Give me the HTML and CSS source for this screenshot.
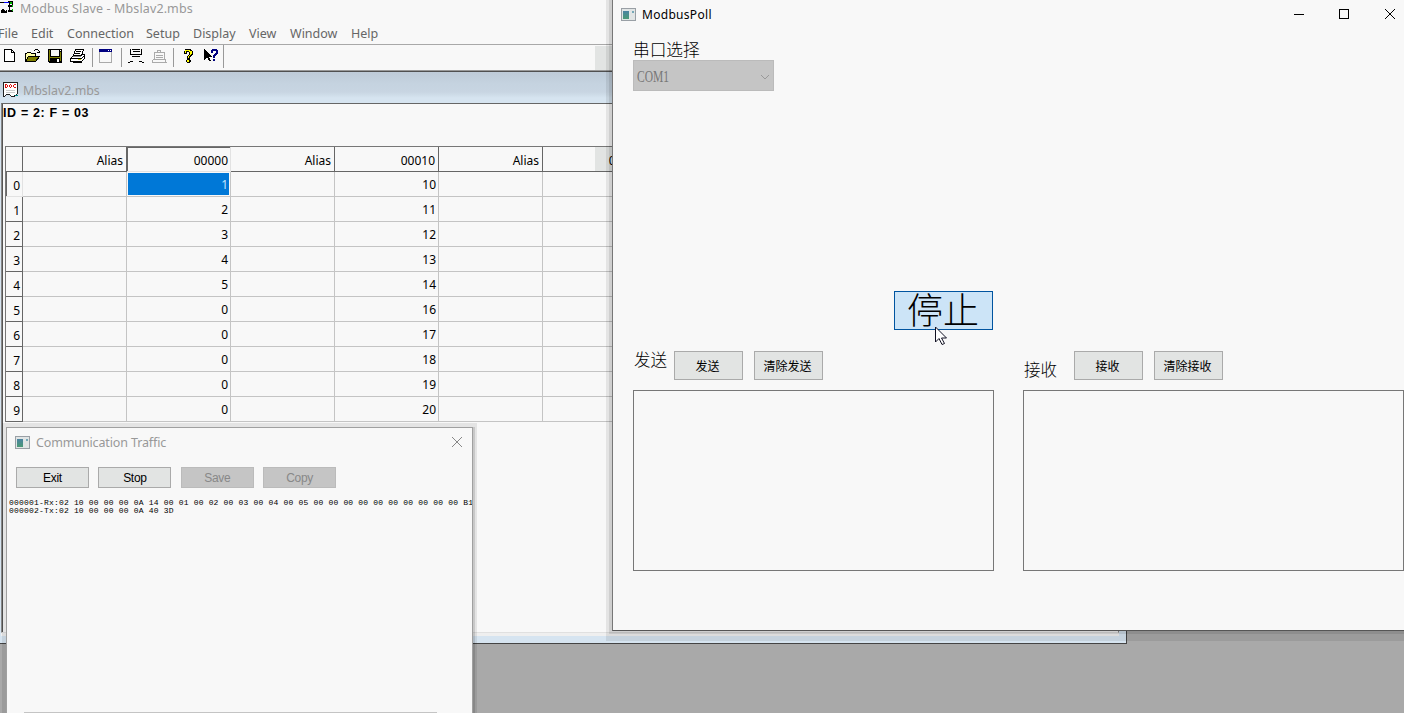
FILE: index.html
```html
<!DOCTYPE html>
<html lang="zh-CN">
<head>
  <meta charset="UTF-8" />
  <meta name="viewport" content="width=device-width, initial-scale=1.0">
  <title>Modbus Slave - Mbslav2.mbs</title>
  <link rel="stylesheet" href="styles.css">
</head>
<body>
  <div class="slave">
    <div class="slave-title">
      <svg class="app-icon" width="16" height="16" viewBox="0 0 16 16" shape-rendering="crispEdges">
        <path d="M0 2h4v1h-4zM8 1h5v2h-5zM9 1h1v4h-1zM12 2h1v3h-1zM8 5h5v2h-5zM9 6h1v5h-1zM8 10h5v2h-5zM0 13h1v-3h1v-1h2v1h1v1h1v-1h1v3z" fill="#000"/>
        <path d="M4 2h5v1h-5z" fill="#00f"/>
        <path d="M10 2h2v2h-2zM12 5h1v2h-1zM12 9h1v2h-1z" fill="#0b0"/>
      </svg>
      <span>Modbus Slave - Mbslav2.mbs</span>
    </div>
    <div class="menu">
      <span class="m-file">File</span>
      <span class="m-edit">Edit</span>
      <span class="m-connection">Connection</span>
      <span class="m-setup">Setup</span>
      <span class="m-display">Display</span>
      <span class="m-view">View</span>
      <span class="m-window">Window</span>
      <span class="m-help">Help</span>
    </div>
    <div class="toolbar">
      <svg width="16" height="16" viewBox="0 0 16 16" shape-rendering="crispEdges">
        <path d="M2.5 1.5h7l3 3v9h-10zM9.5 1.5v3h3" fill="#fff" stroke="#000"/>
      </svg>
      <svg width="16" height="16" viewBox="0 0 16 16" shape-rendering="crispEdges">
        <path d="M.500 13v-7.500h1l1-1h3l1 1h4v3" fill="#ffffa8" stroke="#000"/>
        <path d="M.500 13.500l3-5h11l-4 5z" fill="#808000" stroke="#000"/>
        <path d="M9 2h1v1h-1zM10 1h3v1h-3zM13 2h1v1h-1zM14 3h1v2h-1zM12 4h3v1h-3z"/>
      </svg>
      <svg class="save" width="16" height="16" viewBox="0 0 16 16" shape-rendering="crispEdges">
        <path d="M1 1h14v14h-13l-1-1z"/>
        <path d="M2 2h1v11h-1zM13 4h1v9h-1zM3 9h10v1h-10z" fill="#808000"/>
        <path d="M4 2h8v6h-8z" fill="#f8f8f8"/>
        <path d="M13 2h1v1h-1zM10 11h2v3h-2z" fill="#fff"/>
      </svg>
      <svg width="16" height="16" viewBox="0 0 16 16" shape-rendering="crispEdges">
        <path d="M5.500 1.500h8l-2 6h-8zM3.500 7.500l-3 3v3h11l3-3v-4h-3" fill="#fff" stroke="#000"/>
        <path d="M6 3h5v1h-5zM5 5h5v1h-5zM1 10h11v1h-11zM3 14h9v1h-9zM12 9h1v1h-1zM13 8h1v1h-1z"/>
        <path d="M8 11h3v1h-3z" fill="#cc0"/>
        <path d="M3 8h8v1h-8z" fill="#888"/>
      </svg>
      <i class="sep"></i>
      <svg class="win" width="16" height="16" viewBox="0 0 16 16" shape-rendering="crispEdges">
        <path d="M1.500 1.500h12v13h-12z" fill="#f8f8f8" stroke="#aaa"/>
        <path d="M1 1h13v3h-13z" fill="#000080"/>
        <path d="M10 2h1v1h-1zM12 2h1v1h-1z" fill="#fff"/>
      </svg>
      <i class="sep"></i>
      <svg class="connect" width="16" height="16" viewBox="0 0 16 16" shape-rendering="crispEdges">
        <path d="M2.500 1v6M13.500 1v6M2 6.500h12M4 1.500h8M5 3.500h7M4 8.500h8M0 14.500h2M2 13.500h3M11 13.500h3M14 14.500h2" fill="none" stroke="#000"/>
      </svg>
      <svg width="16" height="16" viewBox="0 0 16 16" shape-rendering="crispEdges">
        <path d="M6.500 4v-2h3v2M3.500 11v-6.500h10v6.500M5 7.500h7M5 9.500h7M2 11.500h13M1 14.500h15M1.500 12v2M14.500 12v2" fill="none" stroke="#aaa"/>
      </svg>
      <i class="sep"></i>
      <svg class="help" width="16" height="16" viewBox="0 0 16 16" shape-rendering="crispEdges">
        <path d="M5 1h6v1h1v1h1v4h-1v1h-1v1h-1v2h-3v-3h1v-1h1v-3h-2v2h-3v-3h1zM7 11h3v1h1v2h-1v1h-3v-1h-1v-2h1z"/>
        <path d="M5 2h5v1h2v3h-1v1h-1v1h-1v2h-1v-2h1v-1h1v-3h-1v-1h-3v2h-1zM7 12h2v2h-2z" fill="#ff0"/>
      </svg>
      <svg width="16" height="16" viewBox="0 0 16 16" shape-rendering="crispEdges">
        <path d="M1 1l8 8h-3l2 4h-2l-2-4-3 3z"/>
        <path d="M8 1h6v1h1v4h-1v1h-1v1h-1v2h-2v-3h1v-1h1v-1h1v-2h-3v2h-2v-3h1zM10 11h2v2h-2z" fill="#000080"/>
      </svg>
      <i class="sep sep-last"></i>
    </div>

    <div class="child">
      <div class="child-title">
        <svg width="17" height="17" viewBox="0 0 17 17" shape-rendering="crispEdges">
          <path d="M.5.5h14v11l-2 2-2 1h-2l-2-2h-3l-2 2h-1z" fill="#fff" stroke="#222"/>
          <path d="M2 2h2v1h1v2h-1v1h-2zM3 3v2h1v-2zM7 2h1v1h1v2h-1v1h-1v-1h-1v-2h1zM7 3v2h1v-2zM11 2h2v1h-2v2h2v1h-2v-1h-1v-2h1z" fill="#d11" fill-rule="evenodd"/>
          <path d="M3 8.500h9M3 10.500h9" stroke="#ccc"/>
          <path d="M12 13h3v1h-3z" fill="#088"/>
        </svg>
        <span>Mbslav2.mbs</span>
      </div>
      <div class="doc">
        <div class="doc-head">ID = 2: F = 03</div>
        <div class="grid">
          <div class="row head"><b></b><span>Alias</span><span class="cur">00000</span><span>Alias</span><span>00010</span><span>Alias</span><span class="shade">00020</span></div>
          <div class="row"><b class="cur">0</b><span></span><span class="sel">1</span><span></span><span>10</span><span></span><span></span></div>
          <div class="row"><b>1</b><span></span><span>2</span><span></span><span>11</span><span></span><span></span></div>
          <div class="row"><b>2</b><span></span><span>3</span><span></span><span>12</span><span></span><span></span></div>
          <div class="row"><b>3</b><span></span><span>4</span><span></span><span>13</span><span></span><span></span></div>
          <div class="row"><b>4</b><span></span><span>5</span><span></span><span>14</span><span></span><span></span></div>
          <div class="row"><b>5</b><span></span><span>0</span><span></span><span>16</span><span></span><span></span></div>
          <div class="row"><b>6</b><span></span><span>0</span><span></span><span>17</span><span></span><span></span></div>
          <div class="row"><b>7</b><span></span><span>0</span><span></span><span>18</span><span></span><span></span></div>
          <div class="row"><b>8</b><span></span><span>0</span><span></span><span>19</span><span></span><span></span></div>
          <div class="row"><b>9</b><span></span><span>0</span><span></span><span>20</span><span></span><span></span></div>
        </div>
      </div>
    </div>
  </div>

  <div class="traffic">
    <div class="traffic-title">
      <i class="win-icon"></i>
      <span>Communication Traffic</span>
      <svg width="12" height="12" viewBox="0 0 12 12"><path d="M1 1l10 10M11 1l-10 10" stroke="#888"/></svg>
    </div>
    <div class="traffic-buttons">
      <button>Exit</button>
      <button>Stop</button>
      <button disabled>Save</button>
      <button disabled>Copy</button>
    </div>
    <pre class="log">000001-Rx:02 10 00 00 00 0A 14 00 01 00 02 00 03 00 04 00 05 00 00 00 00 00 00 00 00 00 00 B1
000002-Tx:02 10 00 00 00 0A 40 3D</pre>
    <div class="traffic-line"></div>
  </div>

  <div class="poll">
    <div class="poll-title">
      <i class="win-icon"></i>
      <span>ModbusPoll</span>
      <svg width="102" height="12" viewBox="0 0 102 12">
        <path d="M0 6.500h10M45.500 1.500h9v9h-9z" fill="none" stroke="#000" shape-rendering="crispEdges"/>
        <path d="M91 1l10 10M101 1l-10 10" stroke="#000"/>
      </svg>
    </div>
    <div class="port">
      <label>串口选择</label>
      <div class="select">
        <span>COM1</span>
        <svg width="10" height="6" viewBox="0 0 10 6"><path d="M1 1l4 4 4-4" fill="none" stroke="#999"/></svg>
      </div>
    </div>
    <div class="stop-row">
      <button class="stop">停止</button>
      <svg class="cursor" width="13" height="21" viewBox="0 0 13 21"><path d="M.5 1v15l3.500-3.500 3 6 2.500-1-3-5.500h5z" fill="#fff" stroke="#112"/></svg>
    </div>
    <div class="panels">
      <div class="panel send">
        <div class="panel-bar"><label>发送</label><button>发送</button><button>清除发送</button></div>
        <div class="box"></div>
      </div>
      <div class="panel receive">
        <div class="panel-bar"><label>接收</label><button>接收</button><button>清除接收</button></div>
        <div class="box"></div>
      </div>
    </div>
  </div>
</body>
</html>
```
FILE: styles.css
```css
* {
  box-sizing: border-box;
}
html, body {
  height: 100%;
  margin: 0;
  overflow: hidden;
}
body {
  position: relative;
  background-color: #a9a9a9;
  font-family: "Noto Sans", "Noto Sans CJK SC", sans-serif;
  font-size: 12px;
  color: #000;
}
svg {
  display: block;
  flex: none;
}
button {
  padding: 0;
  font-family: inherit;
  color: #000;
  background-color: #e2e4e3;
  border: 1px solid #aaa;
}

/* Modbus Slave main window */
.slave-title, .menu, .toolbar {
  background-color: #f8f8f8;
}
.slave-title {
  display: flex;
  height: 20px;
  color: #999;
  font-size: 12.5px;
  line-height: 17px;
}
.slave-title span {
  margin-left: 4px;
  letter-spacing: 0.12px;
}
.menu {
  display: flex;
  height: 24px;
  color: #666;
  font-size: 12.5px;
  line-height: 28px;
  white-space: nowrap;
}
.menu span {
  flex: none;
}
.m-file {
  width: 33px;
  margin-left: -2px;
}
.m-edit { width: 36px; }
.m-connection { width: 79px; }
.m-setup { width: 47px; }
.m-display { width: 56px; }
.m-view { width: 41px; }
.m-window { width: 61px; }
.toolbar {
  display: flex;
  height: 27px;
  padding: 3px 0 0 2px;
  gap: 7px;
  background: linear-gradient(#e2e4e3, #e2e4e3) 595px 1px / 20px 24px no-repeat #f8f8f8;
  border-top: 1px solid #a8a8a8;
  border-bottom: 1px solid #999;
}
.toolbar .save {
  margin-left: -1px;
}
.toolbar .win {
  margin-right: 1px;
}
.toolbar .connect, .toolbar .help {
  margin-left: 1px;
}
.toolbar .sep {
  width: 1px;
  height: 19px;
  margin: 0 -2px 0 -1px;
  background-color: #999;
}
.toolbar .sep-last {
  height: 23px;
  margin: -3px 0 0 -3px;
}

/* document window inside the main window */
.child {
  width: 1127px;
  height: 573px;
  padding: 0 7px 0 1px;
  background: linear-gradient(#becbd8 0, #c5d3e0 12px, #c8d5e2 20px, #d6e4f0 26px, #d6e4f0);
  border-top: 1px solid #505050;
  border-right: 1px solid #444;
  border-bottom: 1px solid #444;
}
.child-title {
  display: flex;
  height: 31px;
  padding: 10px 0 0 2px;
  color: #999;
  font-size: 12.4px;
  line-height: 18px;
}
.child-title span {
  margin-left: 3px;
}
.doc {
  height: 530px;
  padding-left: 3px;
  background-color: #f8f8f8;
  border: 1px solid #888;
  border-top-color: #666;
  border-bottom-color: #e0e0e0;
  box-shadow: inset 1px 0 #555, 0 3px #efefef;
  overflow: hidden;
}
.doc-head {
  height: 42px;
  margin-left: -2px;
  font-family: "Liberation Sans", Arial, sans-serif;
  font-size: 12.5px;
  font-weight: bold;
  letter-spacing: 0.65px;
  line-height: 18px;
}
.grid {
  width: 700px;
  border-left: 1px solid #777;
  border-top: 1px solid #777;
}
.row {
  display: flex;
  height: 25px;
}
.row span, .row b {
  flex: none;
  height: 25px;
  text-align: right;
  border-bottom: 1px solid #c4c4c4;
}
.row span {
  width: 104px;
  padding-right: 2px;
  line-height: 26px;
  border-right: 1px solid #c4c4c4;
}
.row b {
  width: 17px;
  padding-right: 2px;
  font-weight: normal;
  line-height: 28px;
  border-right: 1px solid #666;
  border-bottom-color: #666;
}
.row.head span {
  padding-right: 3px;
  line-height: 28px;
  border-right-color: #666;
  border-bottom-color: #666;
}
.row.head .cur {
  padding-right: 2px;
  border-right-color: #e2e2e2;
  border-bottom-color: #e2e2e2;
  box-shadow: inset 1px 1px #666;
}
.row.head .shade {
  background: linear-gradient(#e2e4e3, #e2e4e3) 52px 0 / 52px 24px no-repeat;
}
.row b.cur {
  border-right-color: #e2e2e2;
  border-bottom-color: #e2e2e2;
  box-shadow: inset 1px 0 #666;
}
.row .sel {
  color: #c0e4ff;
  background: #0078d7;
  background-clip: padding-box;
  box-shadow: inset 0 0 0 1px #f8f8f8;
}

/* Communication Traffic window */
.traffic {
  position: absolute;
  left: 6px;
  top: 427px;
  width: 467px;
  height: 300px;
  background-color: #f8f8f8;
  border: 1px solid #a0a0a0;
  box-shadow: 2px 0 0 rgba(0,0,0,0.12), 0 0 0 4px rgba(0,0,0,0.08);
  overflow: hidden;
}
.traffic-title {
  display: flex;
  align-items: center;
  height: 28px;
  padding: 0 9px 0 8px;
  color: #999;
  font-size: 12.5px;
  letter-spacing: -0.13px;
}
.traffic-title span {
  flex: 1;
  margin-left: 6px;
}
.win-icon {
  flex: none;
  width: 15px;
  height: 13px;
  border: 1px solid #999fa5;
  background: linear-gradient(#4b83a2, #4b9a76) 1px 2px / 6px 8px no-repeat, linear-gradient(#77a9b8, #77a9b8) 10px 2px / 2px 2px no-repeat, #e1e5e5;
}
.traffic-buttons {
  display: flex;
  gap: 9px;
  height: 29px;
  padding: 11px 0 0 9px;
}
.traffic-buttons button {
  width: 73px;
  height: 21px;
  margin-right: 0.4px;
  font-family: "Liberation Sans", Arial, sans-serif;
  font-size: 12px;
  letter-spacing: -0.3px;
}
.traffic-buttons button:disabled {
  color: #888;
  background-color: #c5c5c5;
  border-color: #bbb;
}
.log {
  margin: 14px 0 0 2px;
  font-family: "Liberation Mono", "Courier New", monospace;
  font-size: 8px;
  letter-spacing: 0.19px;
  line-height: 8px;
}
.traffic-line {
  width: 413px;
  height: 1px;
  margin: 197px 0 0 17px;
  background-color: #c4c4c4;
}

/* ModbusPoll window */
.poll {
  position: absolute;
  left: 612px;
  top: 0;
  width: 792px;
  height: 631px;
  background-color: #f8f8f8;
  border-left: 1px solid #777;
  border-bottom: 1px solid #555;
  box-shadow: 0 0 0 3px rgba(0,0,0,0.09), 0 4px 0 6px rgba(0,0,0,0.08);
}
.poll-title {
  display: flex;
  align-items: center;
  height: 28px;
  padding: 0 8px;
}
.poll-title span {
  flex: 1;
  margin-left: 6px;
  font-size: 12px;
  letter-spacing: 0.3px;
}
.port {
  height: 263px;
  padding: 12px 0 0 20px;
}
.port label {
  display: block;
  height: 20px;
  font-size: 16.7px;
  line-height: 18px;
}
.port label, .panel-bar label {
  font-family: "Noto Sans CJK SC", sans-serif;
  font-weight: 300;
}
.select {
  display: flex;
  align-items: center;
  justify-content: space-between;
  width: 141px;
  height: 31px;
  padding: 3px 3px 1px;
  color: #777;
  background-color: #c5c5c5;
  border: 1px solid #bbb;
  font-family: "Liberation Serif", "Noto Sans CJK SC", serif;
  font-size: 16px;
}
.select span {
  transform: scaleX(0.72);
  transform-origin: left;
}
.stop-row {
  position: relative;
  height: 60px;
  padding-left: 281px;
}
.stop {
  display: block;
  width: 99px;
  height: 39px;
  padding: 0 1px 4px 0;
  background-color: #cce4f7;
  border: 1px solid #0054a0;
  font-family: "Noto Sans CJK SC", sans-serif;
  font-size: 36px;
  font-weight: 300;
  line-height: 33px;
}
.cursor {
  position: absolute;
  left: 322px;
  top: 35px;
}
.panels {
  display: flex;
  padding-left: 20px;
  gap: 29px;
}
.send { width: 361px; }
.receive { width: 381px; }
.panel-bar {
  display: flex;
  height: 39px;
}
.panel-bar label {
  width: 41px;
  padding-left: 1px;
  font-size: 16.5px;
  line-height: 17px;
}
.receive label {
  width: 51px;
  padding-top: 10px;
}
.panel-bar button {
  width: 69px;
  height: 29px;
  margin-right: 11px;
  padding-right: 2px;
  font-family: "Noto Sans CJK SC", sans-serif;
  font-size: 12px;
}
.box {
  height: 181px;
  border: 1px solid #777;
}
```
